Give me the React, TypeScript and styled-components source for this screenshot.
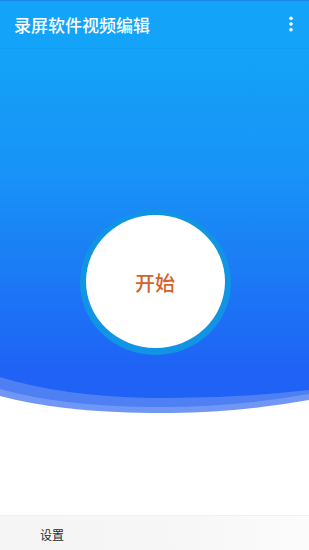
import React from 'react';
import styled, { createGlobalStyle } from 'styled-components';

const GlobalStyle = createGlobalStyle`
  html, body {
    margin: 0;
    padding: 0;
    background: #fff;
  }
  body {
    font-family: "Noto Sans CJK SC", "Noto Sans", sans-serif;
  }
`;

const Screen = styled.div`
  width: 309px;
  height: 550px;
  display: flex;
  flex-direction: column;
  overflow: hidden;
  background: #fff;
`;

const Toolbar = styled.header`
  height: 49px;
  flex-shrink: 0;
  display: flex;
  align-items: center;
  justify-content: space-between;
  padding: 0 12px 0 14px;
  background: #13a3f8;
  border-top: 1px solid #1b86e6;
  border-bottom: 1px solid #119cf0;
  box-sizing: border-box;
`;

const Title = styled.h1`
  margin: 0;
  font-size: 17px;
  font-weight: 500;
  color: #fff;
`;

const MenuButton = styled.button`
  border: 0;
  background: none;
  padding: 0;
  width: 12px;
  height: 20px;
  display: flex;
  align-items: center;
  justify-content: center;
  margin-top: -2px;
`;

const Hero = styled.section`
  height: 323px;
  flex-shrink: 0;
  display: flex;
  justify-content: center;
  align-items: flex-start;
  padding-top: 161px;
  box-sizing: border-box;
  background: linear-gradient(180deg, #13a3f8 0%, #1892f7 40%, #1c78f5 72%, #1f62f5 100%);
`;

const Ring = styled.div`
  width: 151px;
  height: 145px;
  border-radius: 50%;
  background: #1294e4;
  padding: 5px 6px 7px;
  box-sizing: border-box;
  margin-left: 1px;
`;

const StartButton = styled.button`
  width: 100%;
  height: 100%;
  border: 0;
  border-radius: 50%;
  background: #fff;
  color: #d3632d;
  font-family: "Noto Sans CJK SC", "Noto Sans", sans-serif;
  font-size: 20px;
  font-weight: 500;
  padding: 2px 0 0;
  cursor: pointer;
`;

const Wave = styled.svg`
  display: block;
  width: 309px;
  height: 41px;
  flex-shrink: 0;
`;

const Spacer = styled.div`
  flex: 1;
`;

const BottomBar = styled.nav`
  height: 35px;
  flex-shrink: 0;
  display: flex;
  align-items: center;
  padding-left: 40px;
  background: linear-gradient(90deg, #f4f5f4 0%, #f6f6f6 50%, #fbfbfb 100%);
  border-top: 1px solid #f0f0f0;
  box-sizing: border-box;
`;

const BarItem = styled.span`
  font-size: 12px;
  color: #2b2b2b;
  padding-top: 2px;
`;

const DotsIcon = () => (
  <svg width="6" height="16" viewBox="0 0 6 16">
    <circle cx="3" cy="2.2" r="1.8" fill="#fff" />
    <circle cx="3" cy="8" r="1.8" fill="#fff" />
    <circle cx="3" cy="13.8" r="1.8" fill="#fff" />
  </svg>
);

export default function App() {
  return (
    <>
      <GlobalStyle />
      <Screen>
        <Toolbar>
          <Title>录屏软件视频编辑</Title>
          <MenuButton aria-label="更多">
            <DotsIcon />
          </MenuButton>
        </Toolbar>
        <Hero>
          <Ring>
            <StartButton>开始</StartButton>
          </Ring>
        </Hero>
        <Wave viewBox="0 0 309 41" preserveAspectRatio="none">
          <path d="M0 0 H309 V28 Q230 42 150 41 Q60 40 0 24 Z" fill="#7097f5" />
          <path d="M0 0 H309 V22 Q230 36 150 35 Q60 34 0 17 Z" fill="#4e80f4" />
          <path d="M0 0 H309 V18 Q230 27 150 26 Q60 24 0 5 Z" fill="#1f62f5" />
        </Wave>
        <Spacer />
        <BottomBar>
          <BarItem>设置</BarItem>
        </BottomBar>
      </Screen>
    </>
  );
}
